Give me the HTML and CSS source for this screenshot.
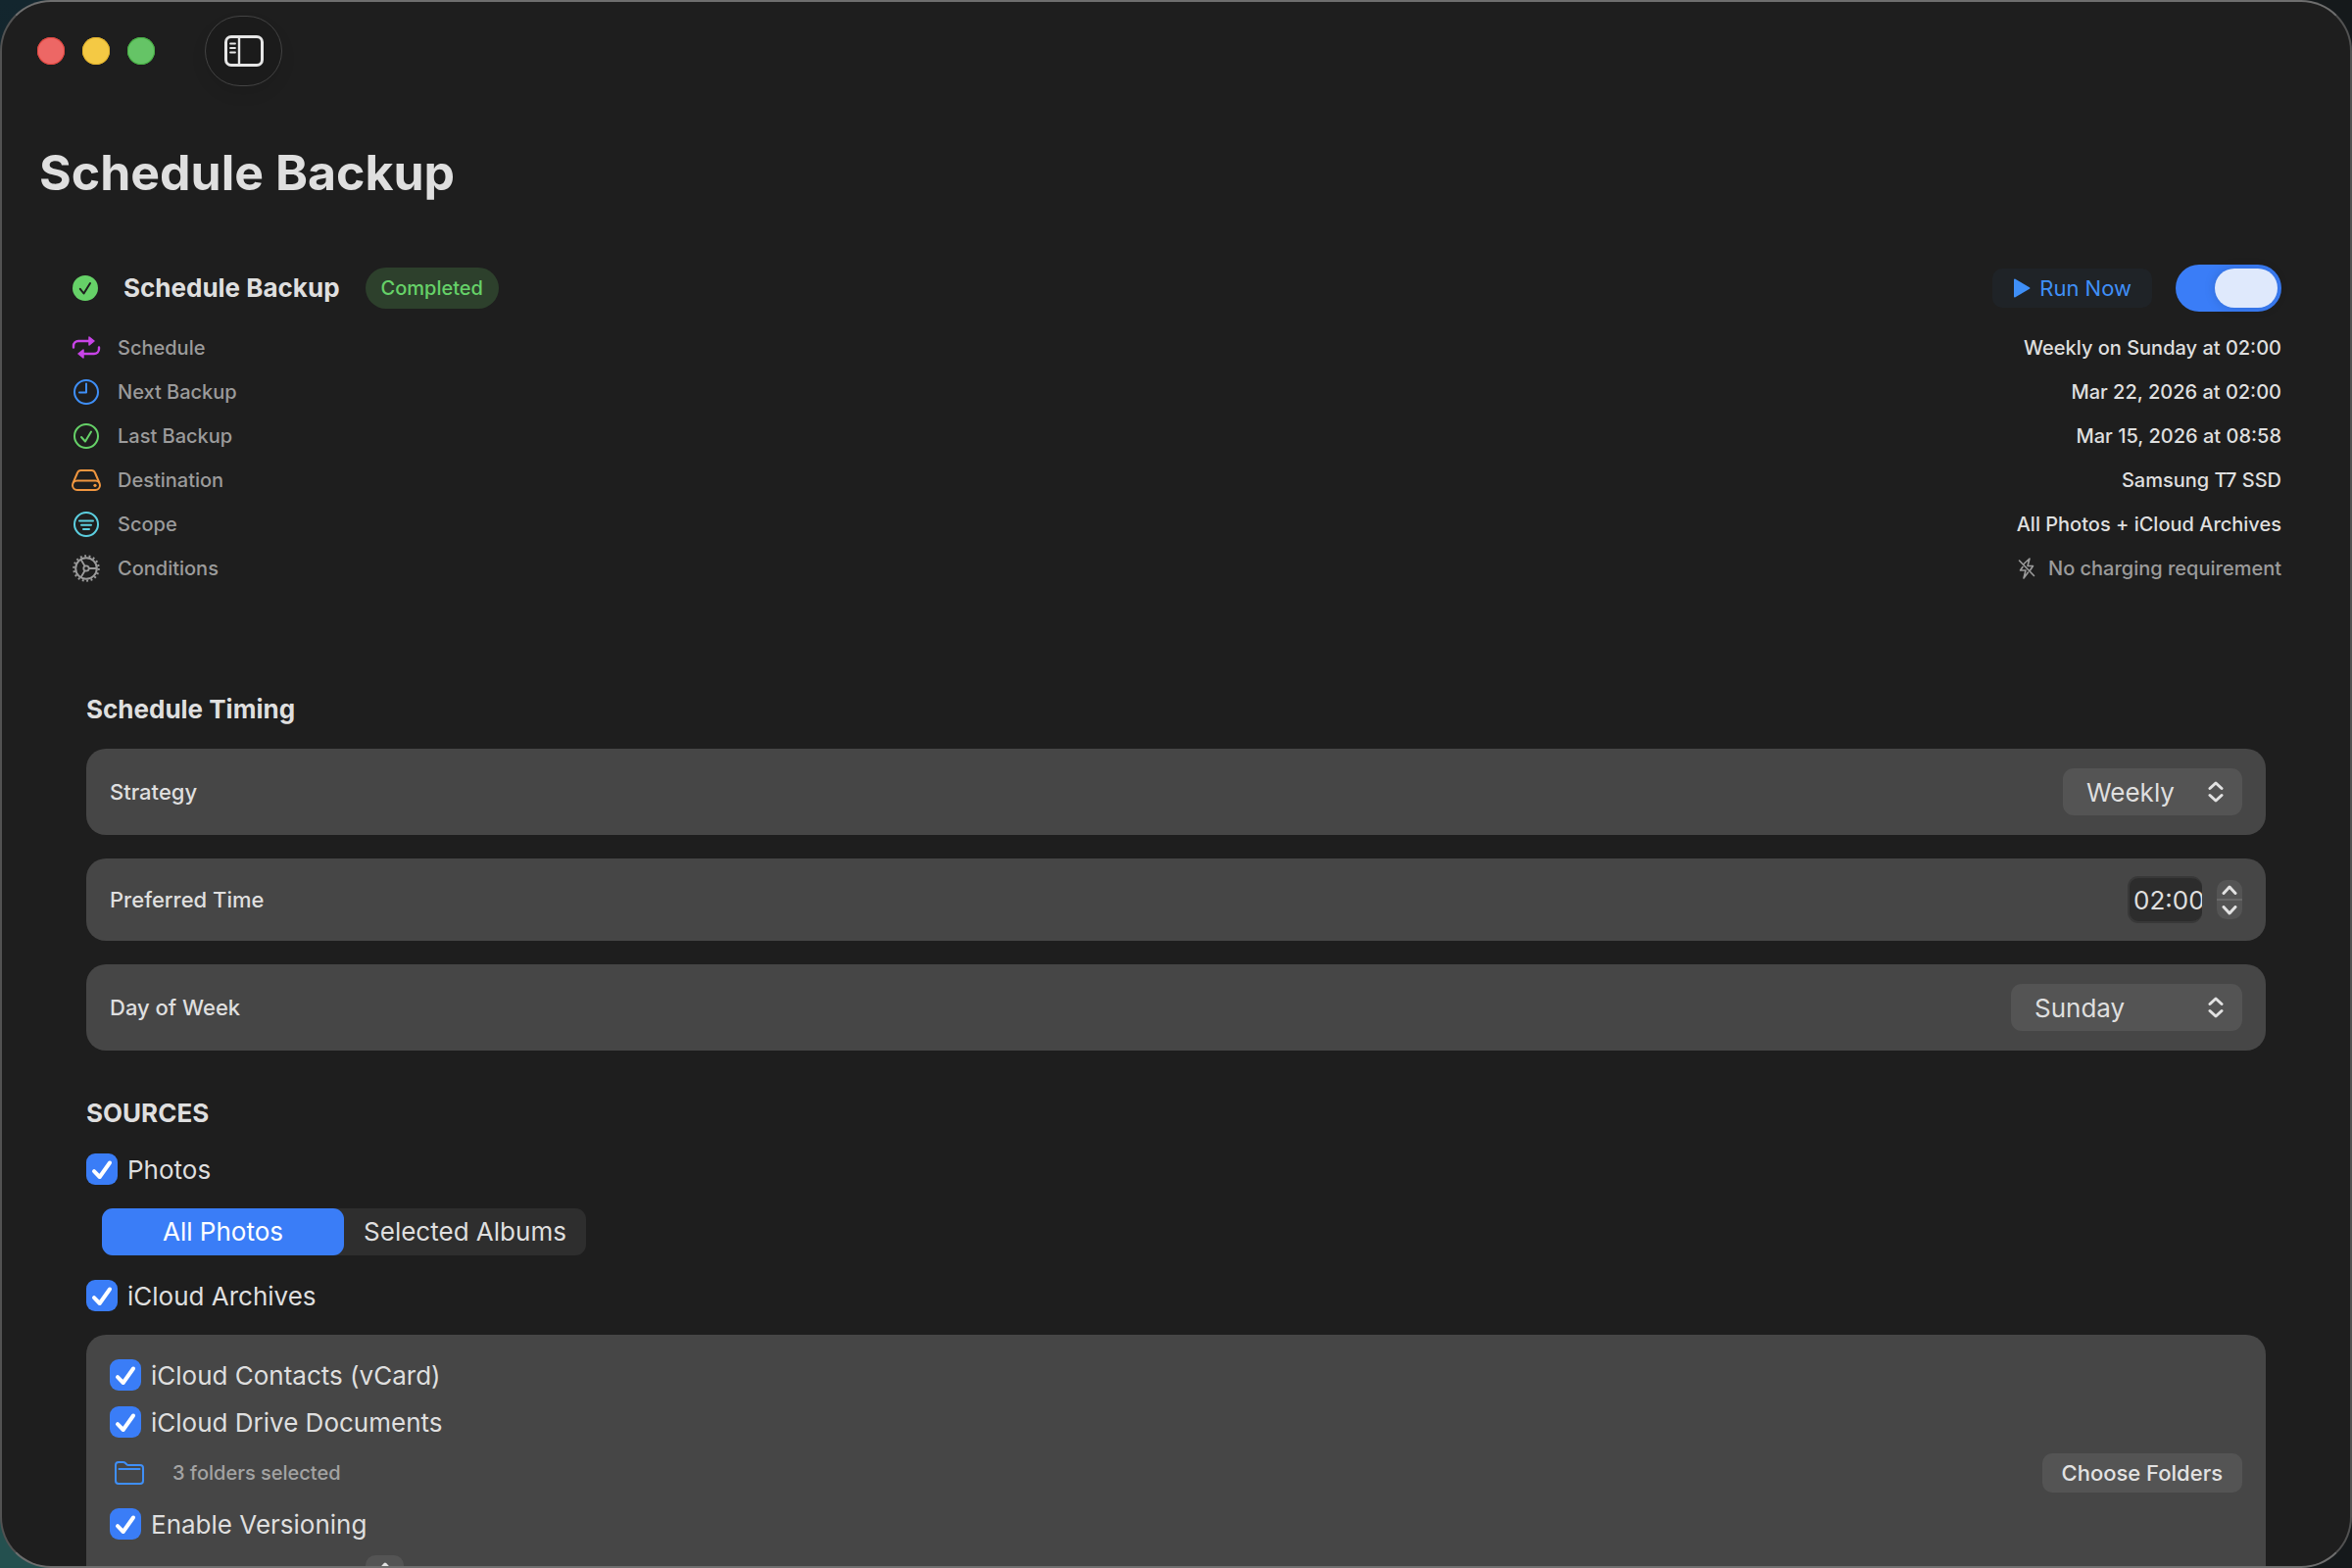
FILE: index.html
```html
<!DOCTYPE html>
<html lang="en">
<head>
    <meta charset="UTF-8">
    <meta name="viewport" content="width=device-width, initial-scale=1.0">
    <title>Schedule Backup</title>
    <link rel="stylesheet" href="styles.css">
</head>
<body>
    <div class="window">
        <header class="toolbar">
            <div class="lights">
                <button class="light close" type="button" aria-label="Close"></button>
                <button class="light minimize" type="button" aria-label="Minimize"></button>
                <button class="light zoom" type="button" aria-label="Zoom"></button>
            </div>
            <button class="sidebar-btn" type="button" aria-label="Toggle sidebar">
                <svg width="40" height="32" viewBox="0 0 40 32" fill="none" stroke="#e6e6e6">
                    <rect x="1.5" y="1.5" width="37" height="29" rx="5.5" stroke-width="3"/>
                    <path d="M15 2v28" stroke-width="2.4"/>
                    <path d="M6 8.5h5M6 13h5M6 17.5h5" stroke-width="1.8" stroke-linecap="round"/>
                </svg>
            </button>
        </header>

        <main>
            <h1>Schedule Backup</h1>

            <section class="summary">
                <div class="summary-head">
                    <svg class="status-icon" width="26" height="26" viewBox="0 0 26 26">
                        <circle cx="13" cy="13" r="13" fill="#66d168"/>
                        <path d="M7.8 13.8l3.7 4.7L18 8" fill="none" stroke="#1e1e1e" stroke-width="2" stroke-linecap="round" stroke-linejoin="round"/>
                    </svg>
                    <h2>Schedule Backup</h2>
                    <span class="badge">Completed</span>
                    <button class="run-btn" type="button">
                        <svg width="18" height="20" viewBox="0 0 18 20"><path d="M2 1.6L16.4 10 2 18.4z" fill="#3f8ff7" stroke="#3f8ff7" stroke-width="2" stroke-linejoin="round"/></svg>
                        Run Now
                    </button>
                    <input class="switch" type="checkbox" role="switch" aria-label="Enable scheduled backup" checked>
                </div>

                <dl class="info">
                    <div class="info-row">
                        <svg width="32" height="28" viewBox="0 0 32 28" fill="none">
                            <path d="M3 13.5v-1.5a5 5 0 0 1 5-5h12M29 13.500v1.500a5 5 0 0 1-5 5H12" stroke="#c944e8" stroke-width="2.4" stroke-linecap="round"/>
                            <path d="M19 3v8l5-4zM13 16v8l-5-4z" fill="#c944e8" stroke="#c944e8" stroke-width="1.5" stroke-linejoin="round"/>
                        </svg>
                        <dt>Schedule</dt>
                        <dd>Weekly on Sunday at 02:00</dd>
                    </div>
                    <div class="info-row">
                        <svg width="32" height="28" viewBox="0 0 32 28" fill="none" stroke="#3f8ff7" stroke-width="2">
                            <circle cx="16" cy="14" r="12"/>
                            <path d="M16 5.5V14.5H9" stroke-linecap="round" stroke-linejoin="round"/>
                        </svg>
                        <dt>Next Backup</dt>
                        <dd>Mar 22, 2026 at 02:00</dd>
                    </div>
                    <div class="info-row">
                        <svg width="32" height="28" viewBox="0 0 32 28" fill="none" stroke="#66d168" stroke-width="2">
                            <circle cx="16" cy="14" r="12"/>
                            <path d="M11 15l4 4.5L21 9.5" stroke-linecap="round" stroke-linejoin="round"/>
                        </svg>
                        <dt>Last Backup</dt>
                        <dd>Mar 15, 2026 at 08:58</dd>
                    </div>
                    <div class="info-row">
                        <svg width="32" height="28" viewBox="0 0 32 28" fill="none" stroke="#f0963f" stroke-width="2">
                            <path d="M2.5 17L7 6.5Q8 4 10.5 4h11Q24 4 25 6.5L29.5 17"/>
                            <rect x="2" y="14.5" width="28" height="9.5" rx="4.7"/>
                            <circle cx="25" cy="19.3" r="1.6" fill="#f0963f" stroke="none"/>
                        </svg>
                        <dt>Destination</dt>
                        <dd>Samsung T7 SSD</dd>
                    </div>
                    <div class="info-row">
                        <svg width="32" height="28" viewBox="0 0 32 28" fill="none" stroke="#5ccfe0" stroke-width="2">
                            <circle cx="16" cy="14" r="12"/>
                            <path d="M9 10.5h14M11 14.7h10M13 19h6" stroke-linecap="round"/>
                        </svg>
                        <dt>Scope</dt>
                        <dd>All Photos + iCloud Archives</dd>
                    </div>
                    <div class="info-row">
                        <svg width="32" height="28" viewBox="0 0 32 28" fill="none" stroke="#9b9b9b">
                            <circle cx="16" cy="14" r="10.8" stroke-width="2"/>
                            <circle cx="16" cy="14" r="12.7" stroke-width="2.2" stroke-dasharray="1.9 2.533"/>
                            <circle cx="16" cy="14" r="2.7" stroke-width="1.8"/>
                            <path d="M18.7 14H27M14.6 11.7L10.5 4.7M14.6 16.3L10.5 23.3" stroke-width="1.8"/>
                        </svg>
                        <dt>Conditions</dt>
                        <dd class="muted">
                            <svg width="18" height="24" viewBox="0 0 18 24" fill="none" stroke="#9b9b9b" stroke-width="1.6" stroke-linecap="round" stroke-linejoin="round">
                                <path d="M6 7.5L12 2l-2 7.5h5.5L12.5 14M10.5 16L6 22l2-8H2.5L5 10.5"/>
                                <path d="M1.5 4L16.5 19.5"/>
                            </svg>
                            No charging requirement
                        </dd>
                    </div>
                </dl>
            </section>

            <section class="timing">
                <h2>Schedule Timing</h2>
                <div class="card">
                    <label for="strategy">Strategy</label>
                    <div class="picker picker-strategy">
                        <select id="strategy">
                            <option>Weekly</option>
                        </select>
                        <svg width="16" height="22" viewBox="0 0 16 22"><path d="M2 7.5L8 2l6 5.5M2 14.5L8 20l6-5.5"/></svg>
                    </div>
                </div>
                <div class="card">
                    <label for="time">Preferred Time</label>
                    <div class="time">
                        <input type="text" id="time" value="02:00">
                        <div class="stepper">
                            <button type="button" aria-label="Later"><svg width="16" height="10" viewBox="0 0 16 10"><path d="M2 8.5L8 2l6 6.5"/></svg></button>
                            <button type="button" aria-label="Earlier"><svg width="16" height="10" viewBox="0 0 16 10"><path d="M2 1.5L8 8l6-6.5"/></svg></button>
                        </div>
                    </div>
                </div>
                <div class="card">
                    <label for="day">Day of Week</label>
                    <div class="picker picker-day">
                        <select id="day">
                            <option>Sunday</option>
                        </select>
                        <svg width="16" height="22" viewBox="0 0 16 22"><path d="M2 7.5L8 2l6 5.5M2 14.5L8 20l6-5.5"/></svg>
                    </div>
                </div>
            </section>

            <section class="sources">
                <h2>SOURCES</h2>
                <label class="check"><input type="checkbox" checked>Photos</label>
                <div class="segmented" role="radiogroup" aria-label="Photo scope">
                    <label><input type="radio" name="scope" checked><span>All Photos</span></label>
                    <label><input type="radio" name="scope"><span>Selected Albums</span></label>
                </div>
                <label class="check"><input type="checkbox" checked>iCloud Archives</label>

                <div class="archives">
                    <label class="check"><input type="checkbox" checked>iCloud Contacts (vCard)</label>
                    <label class="check"><input type="checkbox" checked>iCloud Drive Documents</label>
                    <div class="folders">
                        <svg width="30" height="24" viewBox="0 0 30 24" fill="none" stroke="#3f8ff7" stroke-width="2">
                            <path d="M1 20V4q0-3 3-3h4.5q1.5 0 2.5 1l1.5 1.5q.5.5 1.5.5H26q3 0 3 3v13q0 3-3 3H4q-3 0-3-3z"/>
                            <path d="M4.5 8h21" stroke-linecap="round"/>
                        </svg>
                        <span>3 folders selected</span>
                        <button class="choose-btn" type="button">Choose Folders</button>
                    </div>
                    <label class="check"><input type="checkbox" checked>Enable Versioning</label>
                    <div class="versions">
                        <div class="stepper stepper-large">
                            <button type="button" aria-label="More"><svg width="16" height="10" viewBox="0 0 16 10"><path d="M2 8.5L8 2l6 6.5"/></svg></button>
                            <button type="button" aria-label="Fewer"><svg width="16" height="10" viewBox="0 0 16 10"><path d="M2 1.5L8 8l6-6.5"/></svg></button>
                        </div>
                    </div>
                </div>
            </section>
        </main>
    </div>
</body>
</html>
```
FILE: styles.css
```css
* {
    box-sizing: border-box;
}

body {
    margin: 0;
    height: 100vh;
    overflow: hidden;
    background: linear-gradient(180deg, #13262e 0%, #15191b 60%, #24504f 98%) left / 80px 100% no-repeat, #15191b;
    color: #dfdfdf;
    font-family: Inter, "Liberation Sans", sans-serif;
    font-size: 26px;
}

h1, h2, dl, dd {
    margin: 0;
}

button, input, select {
    font: inherit;
    color: inherit;
    margin: 0;
    padding: 0;
    border: none;
}

.window {
    height: 100vh;
    overflow: hidden;
    border: 2px solid #525252;
    border-top-color: #6e6e6e;
    border-bottom-color: #6e6e6e;
    border-radius: 52px;
    background: #1e1e1e;
}

.toolbar {
    display: flex;
    align-items: center;
    gap: 51px;
    padding: 14px 36px;
}

.lights {
    display: flex;
    gap: 18px;
}

.light {
    width: 28px;
    height: 28px;
    border-radius: 50%;
}

.close {
    background: #ed6765;
    box-shadow: inset 0 0 0 1px #e2463f;
}

.minimize {
    background: #f4c944;
    box-shadow: inset 0 0 0 1px #e3b32c;
}

.zoom {
    background: #65c466;
    box-shadow: inset 0 0 0 1px #46b043;
}

.sidebar-btn {
    display: flex;
    align-items: center;
    justify-content: center;
    width: 79px;
    height: 72px;
    border-radius: 36px;
    border: 1px solid #444;
    background: #1b1b1b;
    box-shadow: 0 8px 16px rgba(0, 0, 0, 0.08);
}

h1 {
    padding: 40px 38px 52px;
    font-size: 50px;
    line-height: 68px;
}

h2 {
    font-size: 26px;
    line-height: 32px;
}

.summary {
    padding: 8px 70px 0 72px;
}

.summary-head {
    display: flex;
    align-items: center;
    height: 48px;
    margin-bottom: 14px;
}

.summary-head h2 {
    margin: 0 26px;
}

.badge {
    padding: 0 16px;
    border-radius: 21px;
    background: #2d402c;
    color: #66d168;
    font-size: 20px;
    font-weight: 500;
    line-height: 42px;
}

.run-btn {
    display: flex;
    align-items: center;
    gap: 9px;
    height: 40px;
    margin-left: auto;
    padding: 0 21px;
    border-radius: 10px;
    background: #1f2327;
    color: #3f8ff7;
    font-size: 22px;
}

.switch {
    appearance: none;
    width: 108px;
    height: 48px;
    margin-left: 24px;
    padding: 4px;
    border-radius: 24px;
    background: #3a7df7;
}

.switch::before {
    content: "";
    display: block;
    width: 64px;
    height: 40px;
    margin-left: 36px;
    border-radius: 20px;
    background: #dfe9fc;
    box-shadow: 0 0 12px rgba(0, 0, 0, 0.15);
}

.info-row {
    display: flex;
    align-items: center;
    height: 45px;
    font-size: 20px;
    font-weight: 500;
}

.info-row dt {
    flex: 1;
    margin-left: 16px;
    color: #9b9b9b;
}

.info-row > svg {
    margin-left: -2px;
}

.info-row dd {
    display: flex;
    align-items: center;
    gap: 13px;
}

.info-row .muted {
    color: #9b9b9b;
}

.timing {
    display: flex;
    flex-direction: column;
    gap: 24px;
    padding: 106px 86px 0;
}

.card {
    display: flex;
    align-items: center;
    justify-content: space-between;
    padding: 20px 24px;
    border-radius: 20px;
    background: #464646;
    font-size: 22px;
    font-weight: 500;
}

.picker {
    position: relative;
    font-size: 26px;
    font-weight: 400;
}

.picker select {
    appearance: none;
    width: 100%;
    height: 48px;
    padding: 0 24px;
    border-radius: 11px;
    background: #545454;
}

.picker svg {
    position: absolute;
    top: 13px;
    right: 19px;
    pointer-events: none;
}

.picker svg,
.stepper svg {
    fill: none;
    stroke: #e2e2e2;
    stroke-width: 3;
    stroke-linecap: round;
    stroke-linejoin: round;
}

.picker-strategy {
    width: 183px;
}

.picker-day {
    width: 236px;
}

.time {
    display: flex;
    align-items: center;
    gap: 15px;
    margin: -2px 0;
}

.time input {
    width: 76px;
    height: 48px;
    padding-left: 4px;
    border: 2px solid #383838;
    border-right-width: 0;
    border-radius: 11px;
    background: #2c2c2c;
    font-size: 26px;
    font-weight: 400;
}

.stepper {
    display: flex;
    flex-direction: column;
    width: 26px;
    height: 40px;
    border-radius: 10px;
    background: #545454;
}

.stepper button {
    display: flex;
    flex: 1;
    align-items: center;
    justify-content: center;
    background: none;
}

.stepper button + button {
    border-top: 2px solid #686868;
}

.sources {
    display: flex;
    flex-direction: column;
    align-items: flex-start;
    padding: 48px 86px 0;
}

.check {
    display: flex;
    align-items: center;
    gap: 10px;
    height: 32px;
}

.check input {
    appearance: none;
    width: 32px;
    height: 32px;
    border-radius: 9px;
    background: #3a7df7 url("data:image/svg+xml,%3Csvg xmlns='http://www.w3.org/2000/svg' viewBox='0 0 32 32'%3E%3Cpath d='M8 18.2L13.700 24 24 9.500' fill='none' stroke='white' stroke-width='4' stroke-linecap='round' stroke-linejoin='round'/%3E%3C/svg%3E");
}

.sources > .check {
    margin-top: 25px;
}

.segmented {
    display: grid;
    grid-template-columns: 1fr 1fr;
    width: 494px;
    margin: 24px 0 0 16px;
    border-radius: 11px;
    background: #2e2e2e;
}

.segmented label {
    position: relative;
}

.segmented input {
    position: absolute;
    opacity: 0;
}

.segmented span {
    display: block;
    border-radius: 11px;
    line-height: 48px;
    text-align: center;
}

.segmented input:checked + span {
    background: #3a7df7;
    color: #fff;
}

.archives {
    display: flex;
    flex-direction: column;
    gap: 16px;
    width: 100%;
    margin-top: 24px;
    padding: 25px 24px;
    border-radius: 20px;
    background: #464646;
}

.folders {
    display: flex;
    align-items: center;
    gap: 29px;
    padding-left: 5px;
    color: #a3a3a3;
    font-size: 20px;
    font-weight: 500;
}

.choose-btn {
    height: 40px;
    margin-left: auto;
    padding: 0 20px;
    border-radius: 10px;
    background: #545454;
    color: #e2e2e2;
    font-size: 22px;
}

.versions {
    padding-left: 261px;
}

.stepper-large {
    width: 39px;
    height: 48px;
}
```
